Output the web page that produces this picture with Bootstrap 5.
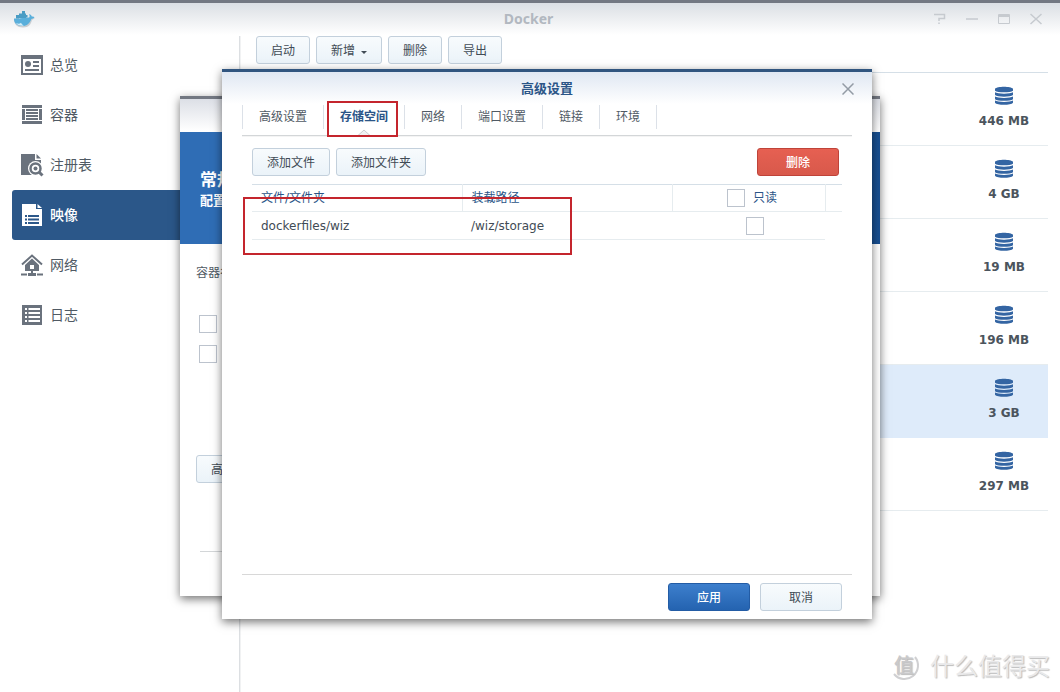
<!DOCTYPE html>
<html lang="zh-CN">
<head>
<meta charset="utf-8">
<meta name="viewport" content="width=device-width, initial-scale=1">
<title>Docker</title>
<link href="https://cdn.jsdelivr.net/npm/bootstrap@5.3.0/dist/css/bootstrap.min.css" rel="stylesheet">
<script src="https://cdn.jsdelivr.net/npm/bootstrap@5.3.0/dist/js/bootstrap.bundle.min.js" defer></script>
<style>
  :root { --ink: #505a64; --navy: #2b5587; --rule: #d5dfe7; --soft: #e6ecef; }
  body { font: 12px/18px "DejaVu Sans", "Noto Sans CJK SC", sans-serif; color: var(--ink); background: #fff; }
  .app-window { border-top: 3px solid #737882; background: linear-gradient(#dbdfe4, #fff 32px) no-repeat; }
  .app-bar { height: 33px; padding: 0 18px 2px 13px; }
  .app-title { font: 700 14px/20px "Noto Sans", sans-serif; color: #b2b8c0; padding-left: 88px; }
  .bar-tools { gap: 20px; }
  .bar-tool { width: 12px; height: 12px; color: #c6cacf; }
  .plain-btn { border: 0; background: none; padding: 0; line-height: 0; display: block; }

  .side-nav { width: 239px; padding: 4px 0 0 12px; }
  .side-link { height: 50px; padding-left: 8px; gap: 6px; font-size: 14px; color: #505a64; border-radius: 3px 0 0 3px; }
  .side-link svg { width: 24px; height: 24px; color: #6a727d; }
  .side-link.active { background: #2b5789; color: #fff; font-weight: 500; }
  .side-link.active svg { color: #fff; }
  .main-pane { border-left: 1px solid #dcdfe2; box-shadow: inset 1px 0 #f1f2f3; padding-right: 12px; }
  .tool-row { gap: 6px; padding: 0 0 8px 16px; }

  .syn { --bs-btn-font-size: 12px; --bs-btn-line-height: 18px; --bs-btn-padding-x: 14px;
         --bs-btn-border-radius: 3px; --bs-btn-color: #414b55; --bs-btn-border-color: #c3d0dc;
         padding-top: 5px; padding-bottom: 3px; background: linear-gradient(#f8fbfd, #ebf3f9); }
  .syn-wide { width: 82px; padding-left: 0; padding-right: 0; }
  .syn-red { --bs-btn-color: #fff; --bs-btn-border-color: #bf4339; background: linear-gradient(#e66052, #d8594b); font-weight: 500; }
  .syn-blue { --bs-btn-color: #fff; --bs-btn-border-color: #235ca5; background: linear-gradient(#3d7fcd, #2463b0); font-weight: 500; }
  .syn.dropdown-toggle::after { border-top-width: 3px; border-left-width: 3px; border-right-width: 3px; margin-left: 6px; vertical-align: 1px; }

  .image-list { border-top: 1px solid var(--rule); }
  .image-row { height: 73px; padding: 13px 0 0; border-bottom: 1px solid var(--soft); }
  .image-row.chosen { background: #deebfa; border-color: #deebfa; }
  .size-cell { width: 88px; gap: 7px; font-weight: 700; font-size: 12px; color: #4b545d; }

  .dialog { background: linear-gradient(var(--tint), #fff 32px) no-repeat #fff; box-shadow: 0 3px 9px rgba(0, 0, 0, .55); }
  .wizard { --tint: #dcdfe6; top: 96px; left: 180px; width: 700px; min-height: 500px; border-top: 3px solid #737882; }
  .banner { margin-top: 33px; height: 112px; padding: 37px 20px; color: #fff; background: linear-gradient(90deg, #2f6db5 60%, #184f91); }
  .banner h2 { font-size: 17px; line-height: 22px; font-weight: 700; margin: 0; }
  .banner p { font-size: 13px; line-height: 20px; font-weight: 700; margin: 0; }
  .field-name { padding-top: 20px; }
  .option-list { gap: 12px; padding: 33px 3px 92px; }
  .wizard-rule { margin: 68px 4px 0; }
  .settings { --tint: #dfe7f2; top: 69px; left: 222px; width: 650px; min-height: 550px; border-top: 3px solid #30557f; padding: 0 20px; }
  .dialog-head { height: 33px; }
  .dialog-close { right: -2px; }
  .dialog-title { font-size: 13px; line-height: 18px; font-weight: 700; color: var(--navy); margin: 0; }

  .tab-strip { border-bottom: 1px solid #d3d6d8; padding-bottom: 6px; box-shadow: 0 1px #f4f4f4; }
  .tab-strip .nav-item { border-right: 1px solid #dce1e8; }
  .tab-strip .nav-item:first-child { border-left: 1px solid #dce1e8; }
  .tab-strip .nav-link { padding: 3px 16px; font-size: 12px; line-height: 18px; color: var(--ink); }
  .tab-strip .nav-link.active { color: var(--navy); font-weight: 700; }
  .tab-notch { left: 50%; bottom: -7px; margin-left: -6px; }
  .callout-box { border: 2px solid #c4252d; pointer-events: none; }
  .callout-tab { inset: -4px 6px -8px 3px; }
  .callout-row { top: 13px; left: -9px; width: 329px; height: 58px; }

  .map-tools { gap: 6px; padding: 12px 13px 8px 10px; }
  .map-area { margin: 0 10px; }
  .maps { table-layout: fixed; margin: 0; border-top: 1px solid var(--rule); }
  .maps .col-path { width: 210px; }
  .maps .col-flag { width: 153px; }
  .maps th, .maps td { height: 27px; padding: 0 9px; border-bottom: 1px solid var(--soft); vertical-align: middle; }
  .maps th { font-weight: 400; color: var(--navy); border-right: 1px solid var(--soft); }
  .maps th:last-child { border-right: 0; }
  .maps td { height: 28px; color: #414b55; }
  .maps td:last-child { border-bottom: 0; }
  .flag-head { gap: 8px; padding-left: 7px; }
  .flag-cell { padding-left: 12px; }
  .box { appearance: none; width: 18px; height: 18px; border: 1px solid #bcc3cd; background: #fff; margin: 0; display: block; flex: none; }
  .dialog-foot { border-top: 1px solid #d8d8d8; gap: 10px; padding: 8px 10px; }
  .stamp { right: 10px; bottom: 7px; gap: 8px; font-size: 24px; line-height: 36px; color: #e9e9ea; text-shadow: 1px 1px 1px #bbb; }
</style>
</head>
<body>
<svg class="d-none" aria-hidden="true">
  <symbol id="disks" viewBox="0 0 18 19">
    <path fill="#3465a3" d="M0 2.800C2 .1 16 .1 18 2.800v2C15.500 6.800 2.500 6.800 0 4.800zM0 6.200c2.500 1.900 15.500 1.900 18 0v2.900c-2.500 2.100-15.500 2.100-18 0zM0 10.500c2.500 1.900 15.500 1.900 18 0v2.700c-2.500 2.100-15.500 2.100-18 0zM0 14.600c2.500 1.900 15.500 1.900 18 0v2.100c-2 2.700-16 2.700-18 0z"/>
  </symbol>
</svg>

<div class="app-window min-vh-100 d-flex flex-column position-relative overflow-hidden">
  <header class="app-bar d-flex align-items-center">
    <svg width="22" height="18" viewBox="0 0 22 18" aria-hidden="true">
      <path fill="#c9ced2" d="M1 9c0 5 3 8.500 9 8.500S18 14 19 10l3-2z"/>
      <path fill="#5aafdb" d="M1 8.500c5 .5 9-1 15-1 1-.6 .6-2 0-3.500 1.800.4 2.500 1.600 2.800 2.600 1.200-.3 2.200 0 2.700.6-.8 1.300-2 1.700-3.200 1.700C17 13 14 16 9.500 16 4 16 .6 13 1 8.500z"/>
      <path fill="#4a9cc4" d="M3 5h3v3.500H3zM6 3.500h7v4.500H6zM9 1h3v3H9zM13 5h1.500v2.500H13z"/>
      <path fill="#d6edf7" d="M3 13c2 1 4 .8 5-.2 1 2 2 2.400 3.500 2.800C7 16 4.500 15 3 13z"/>
    </svg>
    <span class="app-title flex-fill text-center">Docker</span>
    <div class="bar-tools d-flex">
      <button class="plain-btn" aria-label="帮助"><svg class="bar-tool" viewBox="0 0 12 12"><path fill="none" stroke="currentColor" stroke-width="1.500" d="M0 1.500h10.500v4H5V8M5 9.500V11"/></svg></button>
      <button class="plain-btn" aria-label="最小化"><svg class="bar-tool" viewBox="0 0 12 12"><path stroke="currentColor" stroke-width="1.500" d="M0 6h12"/></svg></button>
      <button class="plain-btn" aria-label="最大化"><svg class="bar-tool" viewBox="0 0 12 12"><path fill="none" stroke="currentColor" d="M.5 1.500h11v9H.5zM0 2.500h12M0 3.500h12"/></svg></button>
      <button class="plain-btn" aria-label="关闭"><svg class="bar-tool" viewBox="0 0 12 12"><path stroke="currentColor" stroke-width="1.500" d="M.5 1l11 10M11.500 1L.5 11"/></svg></button>
    </div>
  </header>

  <div class="d-flex flex-fill">
    <nav class="side-nav flex-shrink-0">
      <a href="#" class="side-link d-flex align-items-center text-decoration-none">
        <svg viewBox="0 0 24 24"><path fill="currentColor" fill-rule="evenodd" d="M1 2h22v20H1zM3 6v14h18V6z"/><circle cx="8" cy="11" r="3" fill="currentColor"/><path fill="currentColor" d="M13 8h6v2h-6zM13 12h6v2h-6zM5 16h14v2H5z"/></svg>总览</a>
      <a href="#" class="side-link d-flex align-items-center text-decoration-none">
        <svg viewBox="0 0 24 24"><path fill="currentColor" d="M2 2h20v3H2zM2 18h20v3H2zM2 6h3v11H2zM19 6h3v11h-3zM6 6h12v2H6zM6 9h12v2H6zM6 12h12v2H6zM6 15h12v2H6z"/></svg>容器</a>
      <a href="#" class="side-link d-flex align-items-center text-decoration-none">
        <svg viewBox="0 0 24 24"><path fill="currentColor" d="M1 1h14v6h6v5.500L14 22H1z"/><path fill="currentColor" d="M16.500 1L21 5.500h-4.500z"/><circle cx="15.500" cy="15.500" r="7.500" fill="#fff"/><circle cx="15.500" cy="15.500" r="5" fill="#fff" stroke="currentColor" stroke-width="2.500"/><circle cx="15.500" cy="15.500" r="2" fill="currentColor"/><path stroke="currentColor" stroke-width="3" d="M19 19l3.500 3.500"/></svg>注册表</a>
      <a href="#" class="side-link active d-flex align-items-center text-decoration-none">
        <svg viewBox="0 0 24 24"><path fill="currentColor" d="M2 1h14v5h6v17H2zM17.500 1L22 5h-4.500z"/><path fill="#2b5789" d="M5 12h2v2H5zM8 12h11v2H8zM5 15.500h2v2H5zM8 15.500h11v2H8zM5 19h2v2H5zM8 19h11v2H8z"/></svg>映像</a>
      <a href="#" class="side-link d-flex align-items-center text-decoration-none">
        <svg viewBox="0 0 24 24"><path fill="none" stroke="currentColor" stroke-width="2" d="M2 11.500L12 2.500l10 9"/><path fill="currentColor" fill-rule="evenodd" d="M12 5.500l7 6.500v6h-6v2h3v3H8v-3h3v-2H5v-6zM10 12v4h4v-4z"/><path fill="currentColor" d="M1 20.500h6v2H1zM17 20.500h6v2h-6z"/></svg>网络</a>
      <a href="#" class="side-link d-flex align-items-center text-decoration-none">
        <svg viewBox="0 0 24 24"><path fill="currentColor" d="M2 2h20v20H2z"/><path fill="#fff" d="M5 5h2v2H5zM8.500 5H20v2H8.500zM5 9h2v2H5zM8.500 9H20v2H8.500zM5 13h2v2H5zM8.500 13H20v2H8.500zM5 17h2v2H5zM8.500 17H20v2H8.500z"/></svg>日志</a>
    </nav>

    <main class="main-pane flex-fill">
      <div class="tool-row d-flex">
        <button class="btn syn">启动</button>
        <button class="btn syn dropdown-toggle">新增</button>
        <button class="btn syn">删除</button>
        <button class="btn syn">导出</button>
      </div>
      <div class="image-list">
        <div class="image-row d-flex justify-content-end"><div class="size-cell d-flex flex-column align-items-center"><svg width="18" height="19"><use href="#disks"/></svg><span>446 MB</span></div></div>
        <div class="image-row d-flex justify-content-end"><div class="size-cell d-flex flex-column align-items-center"><svg width="18" height="19"><use href="#disks"/></svg><span>4 GB</span></div></div>
        <div class="image-row d-flex justify-content-end"><div class="size-cell d-flex flex-column align-items-center"><svg width="18" height="19"><use href="#disks"/></svg><span>19 MB</span></div></div>
        <div class="image-row d-flex justify-content-end"><div class="size-cell d-flex flex-column align-items-center"><svg width="18" height="19"><use href="#disks"/></svg><span>196 MB</span></div></div>
        <div class="image-row chosen d-flex justify-content-end"><div class="size-cell d-flex flex-column align-items-center"><svg width="18" height="19"><use href="#disks"/></svg><span>3 GB</span></div></div>
        <div class="image-row d-flex justify-content-end"><div class="size-cell d-flex flex-column align-items-center"><svg width="18" height="19"><use href="#disks"/></svg><span>297 MB</span></div></div>
      </div>
    </main>
  </div>
</div>

<!-- Container wizard, behind the settings dialog -->
<section class="dialog wizard position-absolute">
  <div class="banner"><h2>常规设置</h2><p>配置容器</p></div>
  <div class="px-3">
    <div class="field-name">容器名称</div>
    <div class="option-list d-flex flex-column">
      <input type="checkbox" class="box" aria-label="资源限制">
      <input type="checkbox" class="box" aria-label="自动重启">
    </div>
    <button class="btn syn">高级设置</button>
    <hr class="wizard-rule">
  </div>
</section>

<section class="dialog settings position-absolute d-flex flex-column" role="dialog" aria-labelledby="dlg">
  <div class="dialog-head d-flex align-items-center justify-content-center position-relative">
    <h1 class="dialog-title" id="dlg">高级设置</h1>
    <button class="plain-btn dialog-close position-absolute" aria-label="关闭"><svg width="12" height="12"><path stroke="#939ba5" stroke-width="1.500" d="M.5 .5l11 11M11.500 .5L.5 11.500"/></svg></button>
  </div>
  <ul class="nav tab-strip">
    <li class="nav-item"><a class="nav-link" href="#">高级设置</a></li>
    <li class="nav-item position-relative"><a class="nav-link active" href="#">存储空间</a>
      <svg class="tab-notch position-absolute" width="12" height="7"><path fill="#f0f1f2" stroke="#c8ccd0" d="M0 6.500L6 1l6 5.500"/></svg>
      <span class="callout-box callout-tab position-absolute"></span></li>
    <li class="nav-item"><a class="nav-link" href="#">网络</a></li>
    <li class="nav-item"><a class="nav-link" href="#">端口设置</a></li>
    <li class="nav-item"><a class="nav-link" href="#">链接</a></li>
    <li class="nav-item"><a class="nav-link" href="#">环境</a></li>
  </ul>
  <div class="map-tools d-flex">
    <button class="btn syn">添加文件</button>
    <button class="btn syn">添加文件夹</button>
    <button class="btn syn syn-wide syn-red ms-auto">删除</button>
  </div>
  <div class="map-area position-relative flex-fill">
    <table class="maps w-100">
      <colgroup><col class="col-path"><col class="col-path"><col class="col-flag"><col></colgroup>
      <thead><tr><th>文件/文件夹</th><th>装载路径</th>
        <th><label class="flag-head d-flex align-items-center justify-content-center"><input type="checkbox" class="box">只读</label></th><th></th></tr></thead>
      <tbody><tr><td>dockerfiles/wiz</td><td>/wiz/storage</td><td><div class="flag-cell d-flex justify-content-center"><input type="checkbox" class="box" aria-label="只读"></div></td><td></td></tr></tbody>
    </table>
    <span class="callout-box callout-row position-absolute"></span>
  </div>
  <div class="dialog-foot d-flex justify-content-end">
    <button class="btn syn syn-wide syn-blue">应用</button>
    <button class="btn syn syn-wide">取消</button>
  </div>
</section>

<div class="stamp position-absolute d-flex align-items-center">
  <svg width="32" height="32" viewBox="0 0 32 32" aria-hidden="true"><path fill="none" stroke="#d0d0d2" stroke-width="2" d="M25 6a13 13 0 1 1-21 17"/><text x="4" y="22" font-size="20" font-weight="500" fill="#c9c9cb">值</text></svg>
  <span>什么值得买</span>
</div>
</body>
</html>
